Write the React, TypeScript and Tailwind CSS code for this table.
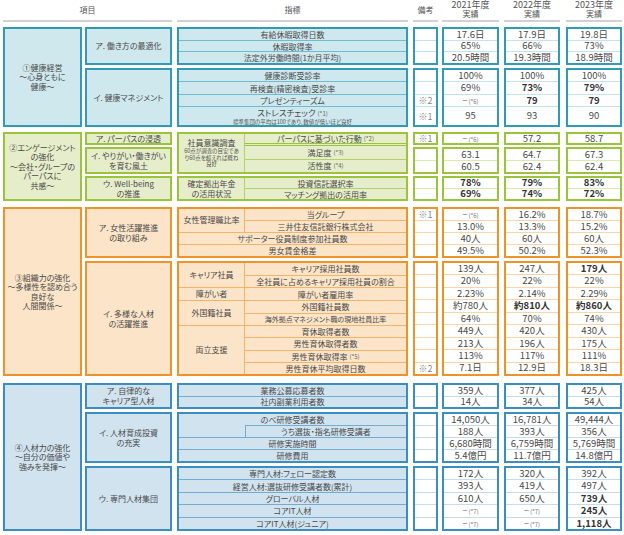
import React from 'react';

type Theme = { b: string; bg: string; sep: string; vsep: string };
type Row = { note?: string; v: string[]; tall?: boolean };
type G = {
  label?: React.ReactNode;
  items?: React.ReactNode[];
  row?: React.ReactNode;
  tall?: boolean;
  custom?: (th: Theme) => React.ReactNode;
  n?: number;
};

const T1: Theme = { b: 'border-[#2f9bb5]', bg: 'bg-[#cfe8ee]', sep: 'border-[#6fbccf]', vsep: 'border-[#c4e3ea]' };
const T2: Theme = { b: 'border-[#9ac43a]', bg: 'bg-[#e6edcb]', sep: 'border-[#b3d16a]', vsep: 'border-[#dbe9b3]' };
const T3: Theme = { b: 'border-[#f0922a]', bg: 'bg-[#fbe4c7]', sep: 'border-[#f2b46c]', vsep: 'border-[#f9d6aa]' };
const T4: Theme = { b: 'border-[#3a8fc0]', bg: 'bg-[#d1e3ef]', sep: 'border-[#73acd2]', vsep: 'border-[#c4dcec]' };

const GROW: Record<number, string> = {
  1: 'flex-[1_1_0%]',
  2: 'flex-[2_1_0%]',
  3: 'flex-[3_1_0%]',
  4: 'flex-[4_1_0%]',
};
const TALL = 'flex-[1.55_1_0%]';

function Sm({ children }: { children: React.ReactNode }) {
  return <span className="text-[6px] text-[#666] ml-[2px]">{children}</span>;
}

function Val({ s }: { s: string }) {
  let bold = false;
  let t = s;
  if (t.startsWith('!')) {
    bold = true;
    t = t.slice(1);
  }
  const m = t.match(/^(.*?)(\(\*\d\))$/);
  if (m) {
    return (
      <span className="text-[9px] text-[#777]">
        {m[1]}
        <span className="text-[6px] ml-[1px]">{m[2]}</span>
      </span>
    );
  }
  return <span className={`text-[9.5px] ${bold ? 'font-bold text-[#333]' : ''}`}>{t}</span>;
}

function MetricBox({ th, h, groups }: { th: Theme; h: string; groups: G[] }) {
  return (
    <div className={`${h} border-2 ${th.b} ${th.bg} flex flex-col`}>
      {groups.map((g, i) => {
        const top = i ? `border-t ${th.sep}` : '';
        if (g.custom) {
          return (
            <div key={i} className={`${GROW[g.n || 1]} ${top} flex flex-col min-h-0`}>
              {g.custom(th)}
            </div>
          );
        }
        if (g.label !== undefined && g.items) {
          return (
            <div key={i} className={`${GROW[g.items.length]} ${top} flex min-h-0`}>
              <div className={`w-[66px] shrink-0 border-r ${th.sep} flex items-center justify-center text-center text-[8px] leading-[10px]`}>
                {g.label}
              </div>
              <div className="flex-1 flex flex-col">
                {g.items.map((it, j) => (
                  <div
                    key={j}
                    className={`flex-1 min-h-0 ${j ? 'border-t ' + th.sep : ''} flex items-center justify-center text-[8px] leading-[9px] whitespace-nowrap`}
                  >
                    {it}
                  </div>
                ))}
              </div>
            </div>
          );
        }
        return (
          <div
            key={i}
            className={`${g.tall ? TALL : GROW[1]} ${top} min-h-0 flex flex-col items-center justify-center text-[8px] leading-[9px] whitespace-nowrap`}
          >
            {g.row}
          </div>
        );
      })}
    </div>
  );
}

function ValCol({ th, boxes, heights, k, cls, gap }: { th: Theme; boxes: Row[][]; heights: string[]; k: number; cls: string; gap: string }) {
  return (
    <div className={`${cls} flex flex-col ${gap}`}>
      {boxes.map((rows, bi) => (
        <div key={bi} className={`${heights[bi]} border-2 ${th.b} bg-white flex flex-col`}>
          {rows.map((r, ri) => (
            <div
              key={ri}
              className={`${r.tall ? TALL : GROW[1]} ${ri ? 'border-t ' + th.vsep : ''} min-h-0 flex items-center justify-center leading-none whitespace-nowrap`}
            >
              {k === -1 ? <span className="text-[9px] text-[#888]">{r.note || ''}</span> : <Val s={r.v[k]} />}
            </div>
          ))}
        </div>
      ))}
    </div>
  );
}

function Section({
  th,
  label,
  subs,
  heights,
  metric,
  boxes,
  gap,
  mt,
}: {
  th: Theme;
  label: string[];
  subs: string[][];
  heights: string[];
  metric: React.ReactNode;
  boxes: Row[][];
  gap: string;
  mt: string;
}) {
  return (
    <div className={`flex ${mt}`}>
      <div className={`ml-[3px] w-[79px] border-2 ${th.b} ${th.bg} flex flex-col items-center justify-center text-[8px] leading-[9.5px]`}>
        {label.map((l, i) => (
          <div key={i} className="whitespace-nowrap">
            {l}
          </div>
        ))}
      </div>
      <div className={`ml-[3px] w-[87px] flex flex-col ${gap}`}>
        {heights.map((h, i) => (
          <div key={i} className={`${h} border-2 ${th.b} ${th.bg} flex flex-col items-center justify-center text-[8px] leading-[10px]`}>
            {subs[i].map((l, j) => (
              <div key={j} className="whitespace-nowrap">
                {l}
              </div>
            ))}
          </div>
        ))}
      </div>
      <div className={`ml-[5px] w-[231px] flex flex-col ${gap}`}>{metric}</div>
      <ValCol th={th} boxes={boxes} heights={heights} k={-1} cls="ml-[5px] w-[25px]" gap={gap} />
      <ValCol th={th} boxes={boxes} heights={heights} k={0} cls="ml-[4px] w-[57px]" gap={gap} />
      <ValCol th={th} boxes={boxes} heights={heights} k={1} cls="ml-[5px] w-[56px]" gap={gap} />
      <ValCol th={th} boxes={boxes} heights={heights} k={2} cls="ml-[6px] w-[56px]" gap={gap} />
    </div>
  );
}

const S1: Row[][] = [
  [
    { v: ['17.6日', '17.9日', '19.8日'] },
    { v: ['65%', '66%', '73%'] },
    { v: ['20.5時間', '19.3時間', '18.9時間'] },
  ],
  [
    { v: ['100%', '100%', '100%'] },
    { v: ['69%', '!73%', '!79%'] },
    { note: '※2', v: ['−(*6)', '!79', '!79'] },
    { note: '※1', v: ['95', '93', '90'], tall: true },
  ],
];

const S2: Row[][] = [
  [{ note: '※1', v: ['−(*6)', '57.2', '58.7'] }],
  [{ v: ['63.1', '64.7', '67.3'] }, { v: ['60.5', '62.4', '62.4'] }],
  [{ v: ['!78%', '!79%', '!83%'] }, { v: ['!69%', '!74%', '!72%'] }],
];

const S3: Row[][] = [
  [
    { note: '※1', v: ['−(*6)', '16.2%', '18.7%'] },
    { v: ['13.0%', '13.3%', '15.2%'] },
    { v: ['40人', '60人', '60人'] },
    { v: ['49.5%', '50.2%', '52.3%'] },
  ],
  [
    { v: ['139人', '247人', '!179人'] },
    { v: ['20%', '22%', '22%'] },
    { v: ['2.23%', '2.14%', '2.29%'] },
    { v: ['約780人', '!約810人', '!約860人'] },
    { v: ['64%', '70%', '74%'] },
    { v: ['449人', '420人', '430人'] },
    { v: ['213人', '196人', '175人'] },
    { v: ['113%', '117%', '111%'] },
    { note: '※2', v: ['7.1日', '12.9日', '18.3日'] },
  ],
];

const S4: Row[][] = [
  [{ v: ['359人', '377人', '425人'] }, { v: ['14人', '34人', '54人'] }],
  [
    { v: ['14,050人', '16,781人', '49,444人'] },
    { v: ['188人', '393人', '356人'] },
    { v: ['6,680時間', '6,759時間', '5,769時間'] },
    { v: ['5.4億円', '11.7億円', '14.8億円'] },
  ],
  [
    { v: ['172人', '320人', '392人'] },
    { v: ['393人', '419人', '497人'] },
    { v: ['610人', '650人', '!739人'] },
    { v: ['−(*7)', '−(*7)', '!245人'] },
    { v: ['−(*7)', '−(*7)', '!1,118人'] },
  ],
];

function HeadCell({ cls, children }: { cls: string; children: React.ReactNode }) {
  return <div className={`${cls} border-b-2 border-[#d2d2d2] flex flex-col items-center justify-center`}>{children}</div>;
}

function Year({ y }: { y: string }) {
  return (
    <>
      <span className="text-[9px] leading-[9px]">{y}年度</span>
      <span className="text-[8px] leading-[9px]">実績</span>
    </>
  );
}

export default function App() {
  return (
    <div className="w-[624px] h-[535px] bg-white overflow-hidden font-['Noto_Sans_CJK_JP','Noto_Sans',sans-serif] text-[#4a4a4a] [font-feature-settings:'palt']">
      <div className="flex h-[22px] text-[#555]">
        <HeadCell cls="ml-[3px] w-[169px]">
          <span className="text-[8px]">項目</span>
        </HeadCell>
        <HeadCell cls="ml-[5px] w-[231px]">
          <span className="text-[8px]">指標</span>
        </HeadCell>
        <HeadCell cls="ml-[5px] w-[25px]">
          <span className="text-[8px]">備考</span>
        </HeadCell>
        <HeadCell cls="ml-[4px] w-[57px] pb-[2px]">
          <Year y="2021" />
        </HeadCell>
        <HeadCell cls="ml-[5px] w-[56px] pb-[2px]">
          <Year y="2022" />
        </HeadCell>
        <HeadCell cls="ml-[6px] w-[56px] pb-[2px]">
          <Year y="2023" />
        </HeadCell>
      </div>

      <Section
        th={T1}
        mt="mt-[5px]"
        gap="gap-[3px]"
        label={['①健康経営', '～心身ともに', '健康～']}
        subs={[['ア. 働き方の最適化'], ['イ. 健康マネジメント']]}
        heights={['h-[38px]', 'h-[59px]']}
        boxes={S1}
        metric={
          <>
            <MetricBox
              th={T1}
              h="h-[38px]"
              groups={[{ row: '有給休暇取得日数' }, { row: '休暇取得率' }, { row: '法定外労働時間(1か月平均)' }]}
            />
            <MetricBox
              th={T1}
              h="h-[59px]"
              groups={[
                { row: '健康診断受診率' },
                { row: '再検査(精密検査)受診率' },
                { row: 'プレゼンティーズム' },
                {
                  tall: true,
                  row: (
                    <>
                      <div className="text-[8.5px] leading-[10px]">
                        ストレスチェック<Sm>(*1)</Sm>
                      </div>
                      <div className="text-[5.5px] leading-[7px] text-[#555]">標準集団の平均は100であり、数値が低いほど良好</div>
                    </>
                  ),
                },
              ]}
            />
          </>
        }
      />

      <Section
        th={T2}
        mt="mt-[5px]"
        gap="gap-[2px]"
        label={['②エンゲージメント', 'の強化', '～会社・グループの', 'パーパスに', '共感～']}
        subs={[['ア. パーパスの浸透'], ['イ. やりがい・働きがい', 'を育む風土'], ['ウ. Well-being', 'の推進']]}
        heights={['h-[13px]', 'h-[27px]', 'h-[25px]']}
        boxes={S2}
        metric={
          <>
            <div className={`h-[42px] border-2 ${T2.b} ${T2.bg} flex`}>
              <div className={`w-[66px] shrink-0 border-r ${T2.sep} flex flex-col items-center justify-center text-center`}>
                <div className="text-[8px] leading-[10px]">社員意識調査</div>
                <div className="text-[5.5px] leading-[6.5px] text-[#555]">
                  60点が調査の目安であ
                  <br />
                  り60点を超えれば概ね
                  <br />
                  良好
                </div>
              </div>
              <div className="flex-1 flex flex-col">
                <div className="h-[9px] flex items-center justify-center text-[8px] leading-[9px] whitespace-nowrap">
                  パーパスに基づいた行動<Sm>(*2)</Sm>
                </div>
                <div className={`flex-1 border-t-[3px] border-double ${T2.b} flex flex-col`}>
                  <div className="flex-1 flex items-center justify-center text-[8px] leading-[9px]">
                    満足度<Sm>(*3)</Sm>
                  </div>
                  <div className={`flex-1 border-t ${T2.sep} flex items-center justify-center text-[8px] leading-[9px]`}>
                    活性度<Sm>(*4)</Sm>
                  </div>
                </div>
              </div>
            </div>
            <MetricBox
              th={T2}
              h="h-[25px]"
              groups={[
                {
                  label: (
                    <>
                      確定拠出年金
                      <br />
                      の活用状況
                    </>
                  ),
                  items: ['投資信託選択率', 'マッチング拠出の活用率'],
                },
              ]}
            />
          </>
        }
      />

      <Section
        th={T3}
        mt="mt-[6px]"
        gap="gap-[3px]"
        label={['③組織力の強化', '～多様性を認め合う', '良好な', '人間関係～']}
        subs={[['ア. 女性活躍推進', 'の取り組み'], ['イ. 多様な人材', 'の活躍推進']]}
        heights={['h-[51px]', 'h-[115px]']}
        boxes={S3}
        metric={
          <>
            <MetricBox
              th={T3}
              h="h-[51px]"
              groups={[
                { label: '女性管理職比率', items: ['当グループ', '三井住友信託銀行株式会社'] },
                { row: 'サポーター役員制度参加社員数' },
                { row: '男女賃金格差' },
              ]}
            />
            <MetricBox
              th={T3}
              h="h-[115px]"
              groups={[
                { label: 'キャリア社員', items: ['キャリア採用社員数', '全社員に占めるキャリア採用社員の割合'] },
                { label: '障がい者', items: ['障がい者雇用率'] },
                {
                  label: '外国籍社員',
                  items: ['外国籍社員数', <span className="text-[7px]">海外拠点マネジメント職の現地社員比率</span>],
                },
                {
                  label: '両立支援',
                  items: [
                    '育休取得者数',
                    '男性育休取得者数',
                    <>
                      男性育休取得率<Sm>(*5)</Sm>
                    </>,
                    '男性育休平均取得日数',
                  ],
                },
              ]}
            />
          </>
        }
      />

      <Section
        th={T4}
        mt="mt-[7px]"
        gap="gap-[3px]"
        label={['④人材力の強化', '～自分の価値や', '強みを発揮～']}
        subs={[['ア. 自律的な', 'キャリア型人材'], ['イ. 人材育成投資', 'の充実'], ['ウ. 専門人材集団']]}
        heights={['h-[26px]', 'h-[51px]', 'h-[65px]']}
        boxes={S4}
        metric={
          <>
            <MetricBox th={T4} h="h-[26px]" groups={[{ row: '業務公募応募者数' }, { row: '社内副業利用者数' }]} />
            <MetricBox
              th={T4}
              h="h-[51px]"
              groups={[
                {
                  n: 2,
                  custom: (th) => (
                    <>
                      <div className="flex-1 min-h-0 flex items-center justify-center text-[8px] leading-[9px]">のべ研修受講者数</div>
                      <div className="flex-1 min-h-0 flex">
                        <div className="w-[66px] shrink-0" />
                        <div className={`flex-1 border-t border-l ${th.sep} flex items-center justify-center text-[8px] leading-[9px]`}>
                          うち選抜・指名研修受講者
                        </div>
                      </div>
                    </>
                  ),
                },
                { row: '研修実施時間' },
                { row: '研修費用' },
              ]}
            />
            <MetricBox
              th={T4}
              h="h-[65px]"
              groups={[
                { row: '専門人材:フェロー認定数' },
                { row: '経営人材:選抜研修受講者数(累計)' },
                { row: 'グローバル人材' },
                { row: 'コアIT人材' },
                { row: 'コアIT人材(ジュニア)' },
              ]}
            />
          </>
        }
      />
    </div>
  );
}
